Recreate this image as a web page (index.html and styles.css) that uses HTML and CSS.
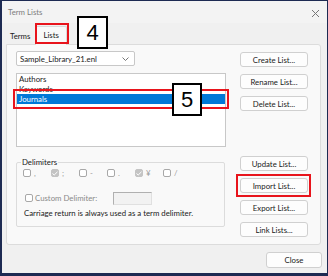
FILE: index.html
```html
<!DOCTYPE html>
<html lang="en">
<head>
    <meta charset="UTF-8">
    <title>Term Lists</title>
    <link rel="stylesheet" href="styles.css">
</head>
<body>

<div class="screen">
    <div class="window">
        <!-- Title bar -->
        <div class="titlebar">
            <span class="title">Term Lists</span>
            <svg class="close-x" width="9" height="9" viewBox="0 0 9 9">
                <path d="M1 1 L8 8 M8 1 L1 8" stroke="#777" stroke-width="1" fill="none"/>
            </svg>
        </div>

        <!-- Tabs -->
        <div class="tabs">
            <div class="tab">Terms</div>
            <div class="tab active">Lists</div>
        </div>

        <div class="panel">
            <div class="left">
                <div class="select">
                    <span>Sample_Library_21.enl</span>
                    <svg width="7" height="4" viewBox="0 0 7 4">
                        <path d="M0.5 0.5 L3.5 3.5 L6.5 0.5" stroke="#555" stroke-width="0.8" fill="none"/>
                    </svg>
                </div>

                <div class="listbox">
                    <div class="item">Authors</div>
                    <div class="item">Keywords</div>
                    <div class="item selected">Journals</div>
                </div>

                <fieldset class="group">
                    <legend>Delimiters</legend>
                    <div class="cb-row">
                        <label class="cb"><span class="box"></span>,</label>
                        <label class="cb"><span class="box checked"><svg width="6" height="5" viewBox="0 0 6 5"><path d="M0.5 2.5 L2.2 4 L5.5 0.8" stroke="#fff" stroke-width="1" fill="none"/></svg></span>;</label>
                        <label class="cb"><span class="box"></span>-</label>
                        <label class="cb"><span class="box"></span>.</label>
                        <label class="cb"><span class="box checked"><svg width="6" height="5" viewBox="0 0 6 5"><path d="M0.5 2.5 L2.2 4 L5.5 0.8" stroke="#fff" stroke-width="1" fill="none"/></svg></span>¥</label>
                        <label class="cb"><span class="box"></span>/</label>
                    </div>
                    <div class="custom-row">
                        <span class="box"></span>
                        <span class="custom-label">Custom Delimiter:</span>
                        <span class="custom-input"></span>
                    </div>
                    <p class="note">Carriage return is always used as a term delimiter.</p>
                </fieldset>
            </div>

            <div class="right">
                <button class="btn">Create List...</button>
                <button class="btn">Rename List...</button>
                <button class="btn">Delete List...</button>
                <button class="btn spaced">Update List...</button>
                <button class="btn">Import List...</button>
                <button class="btn">Export List...</button>
                <button class="btn">Link Lists...</button>
            </div>
        </div>

        <div class="footer">
            <button class="btn close-btn">Close</button>
        </div>
    </div>

    <!-- Annotations -->
    <div class="mark mark-tab"></div>
    <div class="mark mark-row"></div>
    <div class="mark mark-import"></div>
    <div class="step step-4">4</div>
    <div class="step step-5">5</div>
</div>

</body>
</html>
```

FILE: styles.css
```css
body {
    margin: 0;
    padding: 0;
    background: #fff;
    font-family: Lato, "Noto Sans", sans-serif;
    font-size: 7.8px;
    color: #1a1a1a;
}
.screen {
    position: relative;
    width: 328px;
    height: 276px;
}
.window {
    box-sizing: border-box;
    width: 328px;
    height: 276px;
    background: #f0f0f0;
    border-style: solid;
    border-color: #1d2a52;
    border-width: 1px 1px 3px 2px;
    display: flex;
    flex-direction: column;
}
.titlebar {
    height: 22px;
    background: #f3f3f3;
    display: flex;
    align-items: center;
    justify-content: space-between;
    padding: 0 7px 0 6px;
    flex-shrink: 0;
}
.title {
    color: #7d7d7d;
}
.close-x {
    margin-top: 2px;
}
.tabs {
    height: 21px;
    display: flex;
    align-items: flex-end;
    padding-left: 4px;
    flex-shrink: 0;
}
.tab {
    height: 15px;
    line-height: 14px;
    padding: 0 4px;
    color: #1a1a1a;
}
.tab.active {
    height: 18px;
    line-height: 16px;
    padding: 0 7px;
    margin-left: 1px;
    background: #f9f9f9;
    border: 1px solid #d9d9d9;
    border-bottom: none;
    border-radius: 2px 2px 0 0;
    position: relative;
    top: 1px;
}
.panel {
    margin: 0 6px 0 4px;
    height: 201px;
    box-sizing: border-box;
    background: #f9f9f9;
    border: 1px solid #dcdcdc;
    border-radius: 0 3px 3px 3px;
    display: flex;
    padding: 6px 11px 0 9px;
    gap: 14px;
    flex-shrink: 0;
}
.left {
    width: 210px;
    display: flex;
    flex-direction: column;
}
.select {
    width: 119px;
    height: 15px;
    box-sizing: border-box;
    background: #fff;
    border: 1px solid #c8c8c8;
    border-radius: 2px;
    display: flex;
    align-items: center;
    justify-content: space-between;
    padding: 0 5px 0 3px;
}
.listbox {
    margin-top: 7px;
    height: 74px;
    box-sizing: border-box;
    background: #fff;
    border: 1px solid #c8c8c8;
}
.item {
    height: 10px;
    line-height: 10px;
    padding-left: 2px;
}
.item.selected {
    background: #0078d7;
    color: #fff;
}
.group {
    margin: 10px 0 0 0;
    width: 209px;
    box-sizing: border-box;
    border: 1px solid #dcdcdc;
    border-radius: 2px;
    padding: 0 4px 8px 4px;
}
.group legend {
    padding: 0 1px;
    line-height: 10px;
}
.cb-row {
    display: flex;
    margin: 1px 0 0 2px;
    height: 10px;
    align-items: center;
    color: #9a9a9a;
}
.cb {
    width: 28px;
    display: flex;
    align-items: center;
    gap: 3px;
}
.box {
    width: 8px;
    height: 8px;
    box-sizing: border-box;
    border: 1px solid #a8a8a8;
    border-radius: 2px;
    background: #fff;
    display: flex;
    align-items: center;
    justify-content: center;
    flex-shrink: 0;
}
.box.checked {
    background: #c4c4c4;
    border-color: #c4c4c4;
}
.custom-row {
    display: flex;
    align-items: center;
    margin: 13px 0 0 4px;
    height: 14px;
    color: #8a8a8a;
}
.custom-label {
    margin-left: 2px;
    width: 78px;
}
.custom-input {
    width: 39px;
    height: 13px;
    box-sizing: border-box;
    background: #f2f2f2;
    border: 1px solid #b0b0b0;
    border-right-color: #e0e0e0;
    border-bottom-color: #e0e0e0;
}
.note {
    margin: 3px 0 0 3px;
    line-height: 10px;
}
.right {
    width: 68px;
    display: flex;
    flex-direction: column;
    gap: 7px;
    padding-top: 1px;
}
.btn {
    height: 15px;
    width: 68px;
    padding: 0;
    box-sizing: border-box;
    font-family: inherit;
    font-size: 7.8px;
    color: #1a1a1a;
    background: #fdfdfd;
    border: 1px solid #d0d0d0;
    border-radius: 3px;
}
.btn.spaced {
    margin-top: 38px;
}
.footer {
    flex: 1;
    display: flex;
    justify-content: flex-end;
    align-items: flex-start;
    padding: 7px 5px 0 0;
}
.close-btn {
    width: 56px;
    height: 16px;
}

/* annotation overlays */
.mark {
    position: absolute;
    box-sizing: border-box;
    border: 2px solid #e8141c;
}
.mark-tab {
    left: 35px;
    top: 23px;
    width: 34px;
    height: 21px;
}
.mark-row {
    left: 13px;
    top: 89px;
    width: 216px;
    height: 20px;
}
.mark-import {
    left: 236px;
    top: 174px;
    width: 75px;
    height: 23px;
}
.step {
    position: absolute;
    box-sizing: border-box;
    background: #fff;
    border: 2px solid #000;
    font-family: "Liberation Sans", sans-serif;
    font-size: 22px;
    color: #000;
    display: flex;
    align-items: center;
    justify-content: center;
}
.step-4 {
    left: 77px;
    top: 16px;
    width: 31px;
    height: 33px;
}
.step-5 {
    left: 172px;
    top: 83px;
    width: 30px;
    height: 33px;
}
```
